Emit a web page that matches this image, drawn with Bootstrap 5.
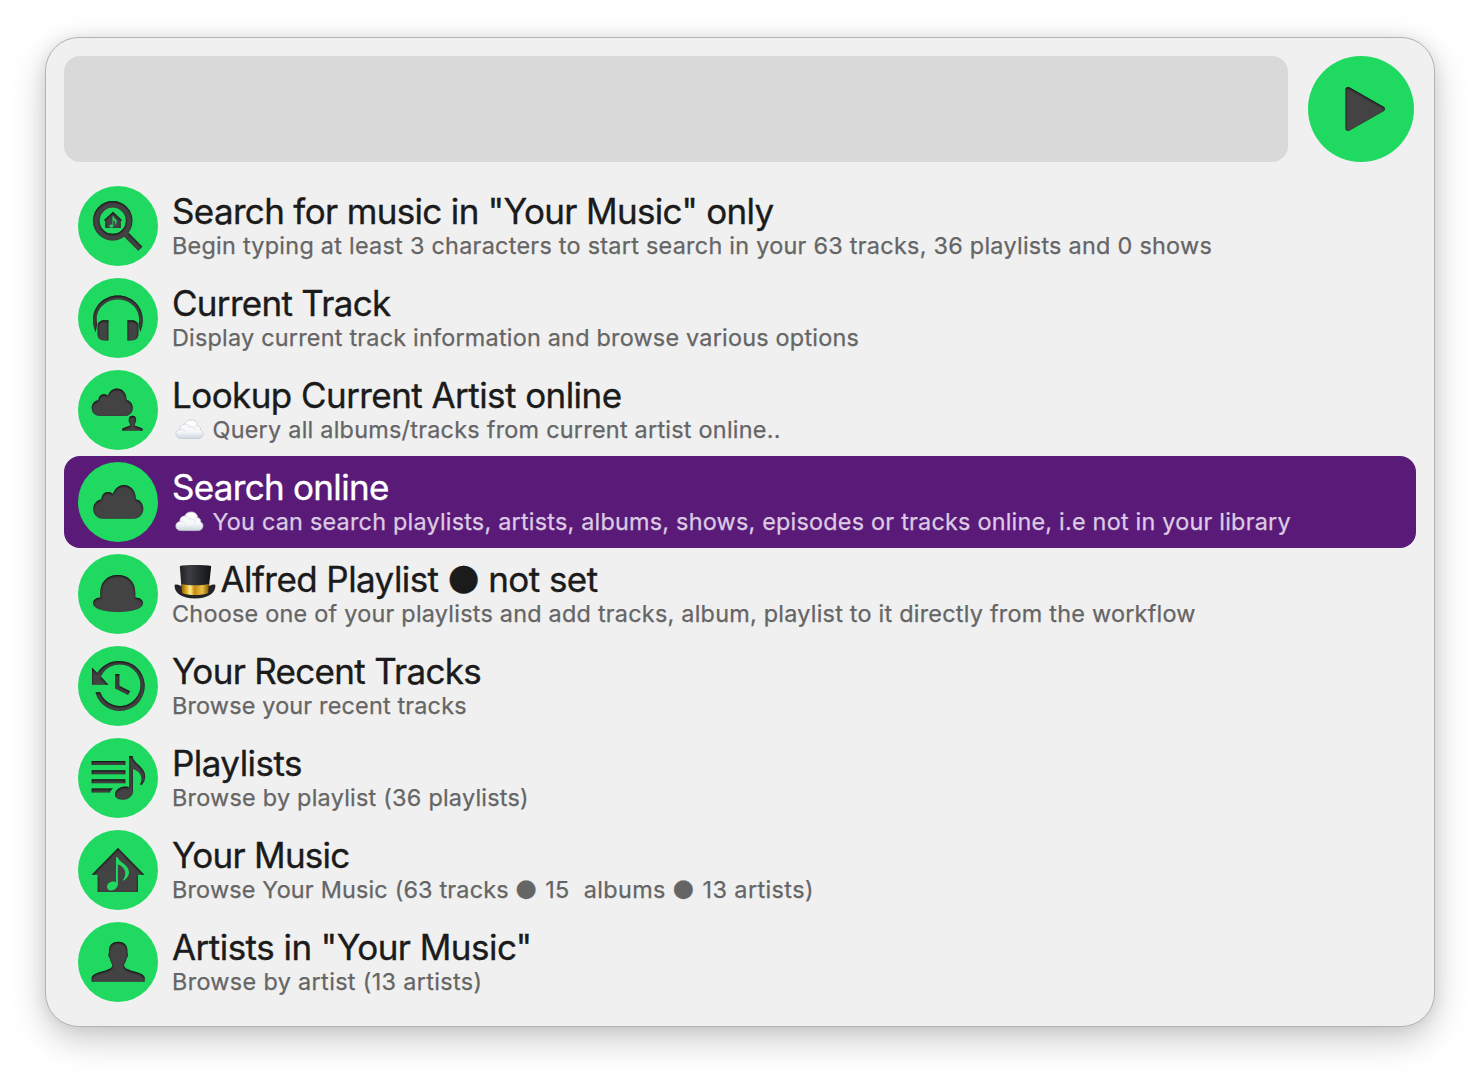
<!DOCTYPE html>
<html lang="en">
<head>
<meta charset="utf-8">
<title>Spotify workflow</title>
<link href="https://cdn.jsdelivr.net/npm/bootstrap@5.3.0/dist/css/bootstrap.min.css" rel="stylesheet">
<style>
body{background:#fff;font-family:Inter,"Noto Sans",sans-serif;height:1080px;padding:37px 45px 0;overflow:hidden}
.launcher{width:1390px;height:990px;border:1px solid #b3b3b3;border-radius:34px;background:#f0f0f0;padding:18px;box-shadow:0 12px 34px rgba(0,0,0,.22),0 0 14px rgba(0,0,0,.07)}
.query{width:1224px;height:106px;border-radius:16px;background:#d9d9d9}
.play{width:106px;height:106px;margin-left:20px}
.results{margin-top:18px}
.result{height:92px;padding:0 14px;border-radius:16px}
.result.active{background:#5a1a78}
.glyph{width:80px;height:80px;margin-right:14px;flex:none}
.label{white-space:pre;padding-top:8px}
.ttl{font-size:35px;line-height:46px;height:46px;color:#1b1b1b;-webkit-text-stroke:.35px currentColor}
.sub{font-size:23.4px;line-height:30px;height:30px;margin-top:-3px;color:#656565;-webkit-text-stroke:.25px currentColor}
.active .ttl{color:#fff}.active .sub{color:#dccbe3}
.r1 .ttl{letter-spacing:-.66px}.r1 .sub{letter-spacing:.27px}
.r2 .ttl{letter-spacing:-.7px}.r2 .sub{letter-spacing:.22px}
.r3 .ttl{letter-spacing:-.56px}.r3 .sub{letter-spacing:.25px}
.r4 .ttl{letter-spacing:-.7px}.r4 .sub{letter-spacing:.22px}
.r5 .ttl{letter-spacing:-.57px}.r5 .sub{letter-spacing:.24px}
.r6 .ttl{letter-spacing:-.7px}.r6 .sub{letter-spacing:.18px}
.r7 .ttl{letter-spacing:-.54px}.r7 .sub{letter-spacing:.25px}
.r8 .ttl{letter-spacing:-.75px}.r8 .sub{letter-spacing:.19px}
.r8 .tally{letter-spacing:.4px}
.r9 .ttl{letter-spacing:-.53px}.r9 .sub{letter-spacing:.35px}
.dot{font-family:"DejaVu Sans";font-size:1.04em;line-height:0;vertical-align:.08em}
.sub .dot{margin-right:1.2px}
.cloud{width:29px;height:21px;margin:0 9px 0 2.5px;vertical-align:-2px}
.tophat{width:42px;height:35px;margin:0 4.5px 0 2px;vertical-align:-7px}
.disc{fill:#1fd960}.ink{fill:#434343;filter:url(#inset)}
.inkline{fill:none;stroke:#434343;filter:url(#inset)}
.cut{fill:#1fd960}
</style>
</head>
<body>
<svg width="0" height="0" class="position-absolute" aria-hidden="true">
<defs>
<filter id="inset" filterUnits="userSpaceOnUse" x="0" y="0" width="106" height="106" color-interpolation-filters="sRGB">
<feGaussianBlur in="SourceAlpha" stdDeviation="1.2" result="b"/><feOffset in="b" dy="1" result="o"/>
<feComposite in="SourceAlpha" in2="o" operator="out" result="edge"/>
<feFlood flood-color="#000" flood-opacity=".85"/><feComposite in2="edge" operator="in" result="sh"/>
<feMerge><feMergeNode in="SourceGraphic"/><feMergeNode in="sh"/></feMerge>
</filter>
<linearGradient id="puff" x1="0" y1="0" x2="0" y2="1"><stop offset="0" stop-color="#fff"/><stop offset=".65" stop-color="#f5f6f8"/><stop offset="1" stop-color="#cdd5df"/></linearGradient>
<linearGradient id="gold" x1="0" x2="1"><stop offset="0" stop-color="#8a5a06"/><stop offset=".2" stop-color="#e0b02c"/><stop offset=".32" stop-color="#fff08a"/><stop offset=".48" stop-color="#c88a12"/><stop offset=".75" stop-color="#e9c046"/><stop offset="1" stop-color="#8a5a06"/></linearGradient>
<linearGradient id="felt" x1="0" x2="1"><stop offset="0" stop-color="#202124"/><stop offset=".3" stop-color="#3c3e43"/><stop offset="1" stop-color="#131315"/></linearGradient>
<path id="cloudshape" d="M24.9 56.7C19.3 56.7 15.3 52.4 15.3 47C15.3 42 18.6 38.2 23.4 37.2C23.6 32.8 26.5 30 30 30C32 30 33.5 30.6 35 31.8C36.8 26.6 40.8 23 45.8 23C52.6 23 58 28.6 57.8 37.2C62.2 37.9 65.3 42 65.3 46.8C65.3 52.4 61.2 56.7 55.7 56.7Z"/>
<path id="bust" d="M13.7 59.7V55.2C15 52.6 19 51 24 49.6C30 47.8 34.3 46.2 34.3 43.5C34.3 41.5 32.2 39.5 31.7 36.2C30.3 35.2 30.2 32.4 31 30.6C30.3 24 33.6 19.7 40.2 19.7C46.8 19.7 50.1 24 49.4 30.6C50.2 32.4 50.1 35.2 48.7 36.2C48.2 39.5 46.1 41.5 46.1 43.5C46.1 46.2 50.4 47.8 56.4 49.6C61.4 51 65.4 52.6 66.7 55.2V59.7Z"/>
<symbol id="puffy" viewBox="0 0 30 22"><path d="M6.5 20.5C3 20.5 .7 18.6 .7 15.8C.7 13 2.6 11.3 5 11C4.6 7.6 6.8 5.3 10 5.3C11.2 2.4 13.7 1 16.7 1C20.9 1 23.4 3.7 23.5 7C26 7.4 27 9.4 26.6 11.5C28.4 12.3 29.3 14 29.1 15.9C28.8 18.8 26.8 20.5 23.6 20.5Z" fill="url(#puff)" stroke="#c5cad1" stroke-width=".8"/><path d="M5 11.2C8 10.5 10 12 10.6 13.4M10 5.6C12.4 5.2 14.2 6.5 14.8 8.5C17.5 7.5 20.5 8.7 21 11.6M23.4 7.3C21.6 7 20 7.8 19.4 8.8" fill="none" stroke="#dde1e6" stroke-width="1"/></symbol>
</defs>
</svg>
<main class="launcher">
<div class="d-flex">
<div class="query"></div>
<svg class="play" viewBox="0 0 106 106"><circle class="disc" cx="53" cy="53" r="53"/><path class="ink" d="M37.5 33.4C37.5 31.2 39.6 30.3 41.3 31.3L75.6 50.7C77.5 51.8 77.5 54.2 75.6 55.3L41.3 74.7C39.6 75.7 37.5 74.8 37.5 72.6Z"/></svg>
</div>
<div class="results d-flex flex-column">
<div class="result r1 d-flex align-items-center">
<svg class="glyph" viewBox="0 0 80 80"><circle class="disc" cx="40" cy="40" r="40"/><g class="inkline"><circle cx="34.7" cy="34.7" r="16.4" stroke-width="6.6"/><path d="M46 46.4L62.3 62.7" stroke-width="5.8"/></g><path class="ink" d="M35 25.7L44.4 34.4H42.7V42H27.3V34.4H25.6Z"/><g class="cut"><ellipse cx="33.4" cy="40" rx="2" ry="1.6"/><path d="M34.5 40V30.2H35.4C35.8 32.2 39 33.4 38.8 36C38.6 37.6 38 38.4 37 39C37.6 37.4 37.6 35 35.4 34.2V40Z"/></g></svg>
<div class="label align-self-start"><div class="ttl">Search for music in "Your Music" only</div><div class="sub">Begin typing at least 3 characters to start search in your 63 tracks, 36 playlists and 0 shows</div></div>
</div>
<div class="result r2 d-flex align-items-center">
<svg class="glyph" viewBox="0 0 80 80"><circle class="disc" cx="40" cy="40" r="40"/><path class="ink" d="M17.7 54C15.8 50 15 46 15 42C15 28 26 17.4 39.9 17.4C53.8 17.4 64.8 28 64.8 42C64.8 46 64 50 62.1 54L60.6 46C61 44.5 61.2 43 61.2 41.6C61.2 30 51.5 21.6 39.9 21.6C28.3 21.6 18.6 30 18.6 41.6C18.6 43 18.8 44.5 19.2 46Z"/><path class="ink" d="M30.4 42.3V62.4H26C22 62.4 19.6 60 19.6 56.2V48.6C19.6 44.7 22 42.3 26 42.3ZM49.4 42.3V62.4H53.8C57.8 62.4 60.4 60 60.4 56.2V48.6C60.4 44.7 57.8 42.3 53.8 42.3Z"/></svg>
<div class="label align-self-start"><div class="ttl">Current Track</div><div class="sub">Display current track information and browse various options</div></div>
</div>
<div class="result r3 d-flex align-items-center">
<svg class="glyph" viewBox="0 0 80 80"><circle class="disc" cx="40" cy="40" r="40"/><g class="ink"><use href="#cloudshape" transform="translate(1.2 -.2) scale(.82 .815)"/><use href="#bust" transform="translate(38.9 38.3) scale(.386 .376)"/></g></svg>
<div class="label align-self-start"><div class="ttl">Lookup Current Artist online</div><div class="sub"><svg class="cloud"><use href="#puffy"/></svg>Query all albums/tracks from current artist online..</div></div>
</div>
<div class="result r4 active d-flex align-items-center">
<svg class="glyph" viewBox="0 0 80 80"><circle class="disc" cx="40" cy="40" r="40"/><use class="ink" href="#cloudshape"/></svg>
<div class="label align-self-start"><div class="ttl">Search online</div><div class="sub"><svg class="cloud"><use href="#puffy"/></svg>You can search playlists, artists, albums, shows, episodes or tracks online, i.e not in your library</div></div>
</div>
<div class="result r5 d-flex align-items-center">
<svg class="glyph" viewBox="0 0 80 80"><circle class="disc" cx="40" cy="40" r="40"/><path class="ink" d="M22.3 43.5V39C22.3 28 29 21 39.8 21C50.6 21 57.3 28 57.3 39V43.5C62 43.6 65 46 65 49.3C65 54.5 55.5 58 40 58C24.5 58 15 54.5 15 49.3C15 46 18 43.6 22.3 43.5Z"/></svg>
<div class="label align-self-start"><div class="ttl"><svg class="tophat" viewBox="0 0 42 36" preserveAspectRatio="none"><path d="M.6 21.5C3.6 20.3 6.5 22.5 10 24.5H32C35.5 22.5 38.4 20.3 41.4 21.5C42 29.5 34 35.5 21 35.5C8 35.5 0 29.5 .6 21.5Z" fill="#222327"/><path d="M5.8 2C12 .6 30 .6 37.2 2L34.4 29C28 32 14 32 7.8 29Z" fill="url(#felt)"/><path d="M7.2 20.5C14 22.3 28 22.3 35 20.5L34.2 29.8C28 32.6 14 32.6 8 29.8Z" fill="url(#gold)"/></svg>Alfred Playlist <span class="dot">●</span> not set</div><div class="sub">Choose one of your playlists and add tracks, album, playlist to it directly from the workflow</div></div>
</div>
<div class="result r6 d-flex align-items-center">
<svg class="glyph" viewBox="0 0 80 80"><circle class="disc" cx="40" cy="40" r="40"/><g class="ink"><path d="M14 21.7L19.4 27C24 19.6 32 15 41.3 15A25 25 0 1 1 17.5 46.3H22.2A20.8 20.8 0 1 0 22.8 30.6L30.4 38.7H14Z"/><path d="M37.3 28H41.3V39.7L52 45.2L50 49L37.3 42.4Z"/></g></svg>
<div class="label align-self-start"><div class="ttl">Your Recent Tracks</div><div class="sub">Browse your recent tracks</div></div>
</div>
<div class="result r7 d-flex align-items-center">
<svg class="glyph" viewBox="0 0 80 80"><circle class="disc" cx="40" cy="40" r="40"/><path class="ink" d="M13.7 22.9H47.3V27H13.7ZM13.7 32.2H47.3V36.2H13.7ZM13.7 41.2H47.3V45.3H13.7ZM13.7 50.4H34.8C33.4 51.6 32.4 52.8 32 54.4H13.7Z"/><path class="ink" d="M51.2 18H54.6C55.2 26 67.2 28.5 67.2 38.4C67.2 42 65.6 45.3 63.2 47.2L62.2 46.2C65.6 40.5 63 33.4 55 31V53.5C54.8 58 50.4 61.8 44.6 61.8C40 61.8 37 59.8 37 56.6C37 52.2 41.6 48.4 47 48.4C48.8 48.4 50.2 48.7 51.2 49.3Z"/></svg>
<div class="label align-self-start"><div class="ttl">Playlists</div><div class="sub">Browse by playlist (36 playlists)</div></div>
</div>
<div class="result r8 d-flex align-items-center">
<svg class="glyph" viewBox="0 0 80 80"><circle class="disc" cx="40" cy="40" r="40"/><path class="ink" d="M40 18L66.3 44.7H60V62H19.7V44.7H13.7Z"/><path class="cut" d="M38 27.2H39.9C40.6 32.4 51.2 34.4 51 42.4C50.8 46.4 48 49.6 44.2 50.8C48.6 46.5 49.2 37.5 39.9 34.6V54.6C39.4 58 36.4 60.5 33.2 60.5C30.6 60.5 29 59 29 56.8C29 53.8 32 51.4 35.2 51.4C36.4 51.4 37.4 51.6 38 52Z"/></svg>
<div class="label align-self-start"><div class="ttl">Your Music</div><div class="sub">Browse Your Music (63 tracks <span class="dot">●</span><span class="tally"> 15  albums <span class="dot">●</span> 13 artists)</span></div></div>
</div>
<div class="result r9 d-flex align-items-center">
<svg class="glyph" viewBox="0 0 80 80"><circle class="disc" cx="40" cy="40" r="40"/><use class="ink" href="#bust"/></svg>
<div class="label align-self-start"><div class="ttl">Artists in "Your Music"</div><div class="sub">Browse by artist (13 artists)</div></div>
</div>
</div>
</main>
<script src="https://cdn.jsdelivr.net/npm/bootstrap@5.3.0/dist/js/bootstrap.bundle.min.js"></script>
</body>
</html>
